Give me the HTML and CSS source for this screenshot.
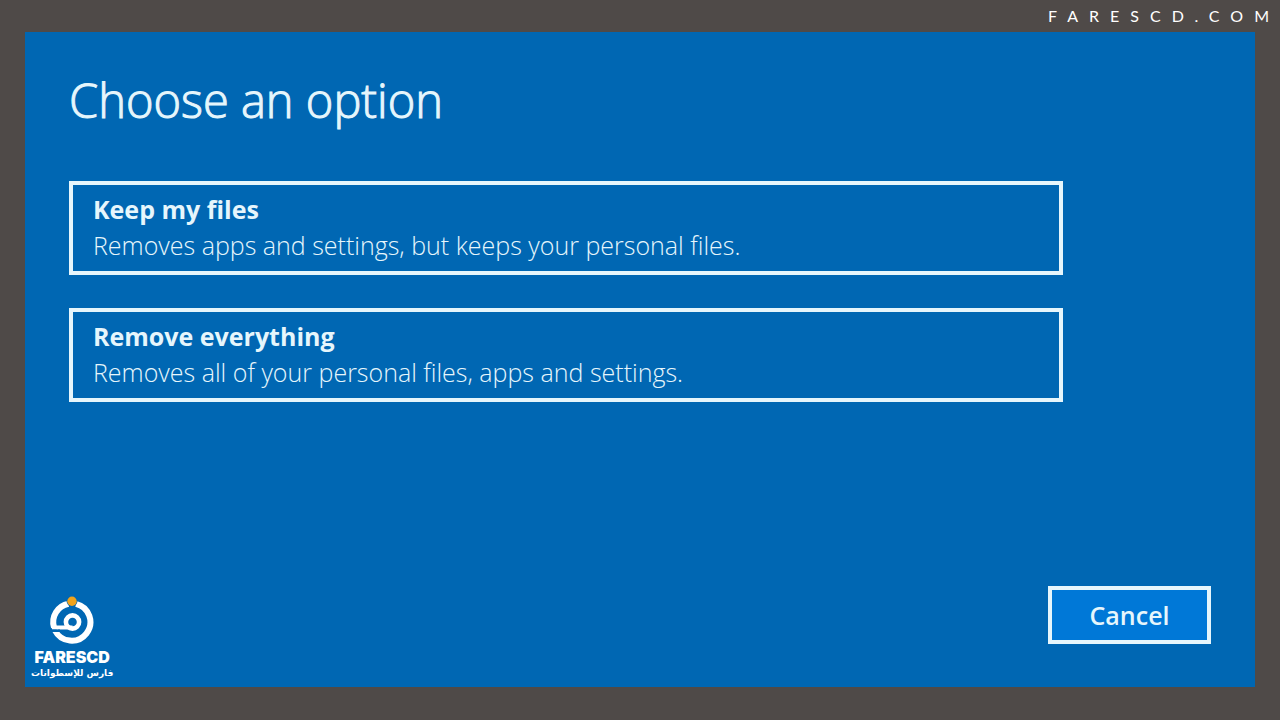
FILE: index.html
```html
<!DOCTYPE html>
<html lang="en">
<head>
    <meta charset="UTF-8">
    <meta name="viewport" content="width=device-width, initial-scale=1.0">
    <title>Choose an option</title>
    <link rel="stylesheet" href="styles.css">
</head>
<body>
    <header class="top-bar">
        <a href="#" class="site-link">FARESCD.COM</a>
    </header>

    <main class="panel">
        <h1 class="title">Choose an option</h1>

        <div class="options">
            <button type="button" class="option">
                <span class="option-name">Keep my files</span>
                <span class="option-text">Removes apps and settings, but keeps your personal files.</span>
            </button>
            <button type="button" class="option">
                <span class="option-name">Remove everything</span>
                <span class="option-text">Removes all of your personal files, apps and settings.</span>
            </button>
        </div>

        <footer class="panel-footer">
            <div class="brand">
                <svg class="brand-logo" viewBox="0 0 48 50" aria-hidden="true">
                    <g fill="none" stroke="#fff">
                        <path d="M20.5 7.8 A18.7 18.7 0 0 0 6 31.5" stroke-width="6"/>
                        <path d="M7 34.5 A18.7 18.7 0 1 0 28 7.8" stroke-width="6"/>
                        <path d="M4 31.5 H24.5" stroke-width="4"/>
                        <circle cx="24.5" cy="26" r="6.6" stroke-width="4.6"/>
                    </g>
                    <path d="M2 33.5 H12 V36 H2 Z" fill="#0067b3"/>
                    <circle cx="24" cy="5.2" r="5.4" fill="#0067b3"/>
                    <circle cx="24" cy="5.2" r="4.7" fill="#f0a31c"/>
                </svg>
                <span class="brand-name">FARESCD</span>
                <span class="brand-sub" lang="ar" dir="rtl">فارس للإسطوانات</span>
            </div>
            <button type="button" class="cancel-button">Cancel</button>
        </footer>
    </main>
</body>
</html>
```
FILE: styles.css
```css
* {
    box-sizing: border-box;
}

body {
    margin: 0;
    min-height: 100vh;
    display: flex;
    flex-direction: column;
    background-color: #4f4a48;
    color: #e6f6fc;
    font-family: "Open Sans", "Noto Sans", sans-serif;
}

.top-bar {
    display: flex;
    justify-content: flex-end;
    height: 32px;
}

.site-link {
    color: white;
    font-family: Lato, sans-serif;
    font-size: 16px;
    line-height: 32px;
    letter-spacing: 11px;
    text-decoration: none;
}

.panel {
    flex: 1;
    display: flex;
    flex-direction: column;
    margin: 0 25px 33px;
    padding: 36px 44px 8px;
    background-color: #0067b3;
}

.title {
    margin: 0;
    font-size: 47px;
    font-weight: 300;
    line-height: 64px;
    -webkit-text-stroke: 1px #e6f6fc;
}

.options {
    display: flex;
    flex-direction: column;
    gap: 33px;
    width: 87%;
    margin-top: 49px;
}

.option {
    display: flex;
    flex-direction: column;
    padding: 6px 20px 8px;
    background: none;
    border: 4px solid #e6f6fc;
    color: #e6f6fc;
    font-family: inherit;
    font-size: 25px;
    line-height: 36px;
    text-align: left;
    cursor: pointer;
}

.option:hover {
    background-color: #0078d7;
}

.option-name {
    font-weight: 700;
}

.option-text {
    font-weight: 300;
}

.panel-footer {
    display: flex;
    justify-content: space-between;
    align-items: flex-start;
    margin-top: auto;
}

.brand {
    display: flex;
    flex-direction: column;
    align-items: center;
    margin: 10px 0 0 -38px;
    color: white;
}

.brand-logo {
    width: 48px;
    height: 50px;
}

.brand-name {
    font-family: Inter, sans-serif;
    font-size: 16px;
    font-weight: 900;
    line-height: 22px;
}

.brand-sub {
    font-family: "DejaVu Sans", sans-serif;
    font-size: 9px;
    font-weight: 700;
    line-height: 11px;
}

.cancel-button {
    width: 163px;
    height: 58px;
    background-color: #0078d7;
    border: 4px solid #e6f6fc;
    color: #e6f6fc;
    font-family: inherit;
    font-size: 25px;
    font-weight: 600;
    cursor: pointer;
}

.cancel-button:hover {
    background-color: #1a86db;
}
```
